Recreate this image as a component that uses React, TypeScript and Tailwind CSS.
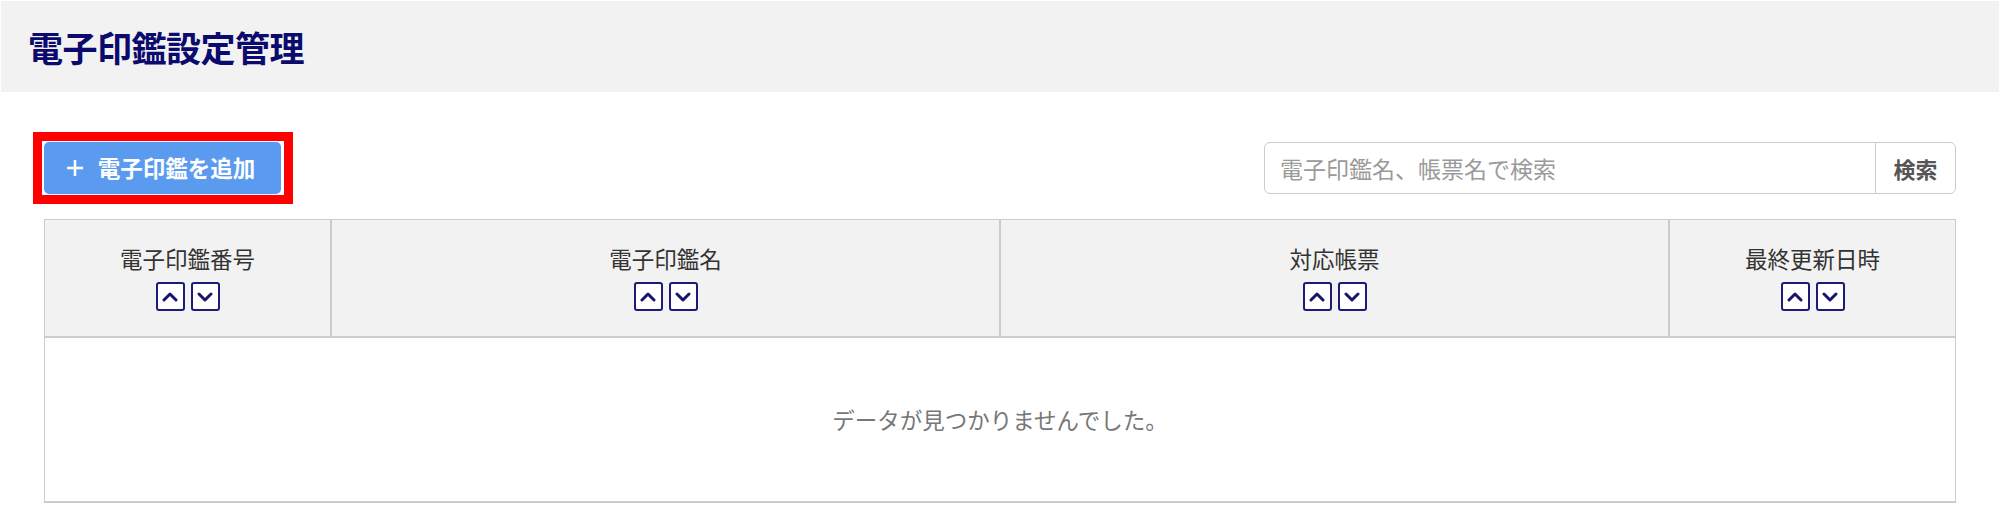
import { useState } from "react";

const columns = ["電子印鑑番号", "電子印鑑名", "対応帳票", "最終更新日時"];

const SortButton = ({ dir }: { dir: "up" | "down" }) => (
    <button className="w-[29px] h-[29px] border-2 border-[#1c1c78] rounded-[3px] bg-white flex items-center justify-center">
        <svg width="16" height="10" viewBox="0 0 16 10" fill="none" stroke="#15156e" strokeWidth="3" strokeLinecap="round" strokeLinejoin="round">
            {dir === "up" ? <polyline points="2,8 8,2 14,8" /> : <polyline points="2,2 8,8 14,2" />}
        </svg>
    </button>
);

const App = () => {
    const [keyword, setKeyword] = useState("");

    return (
        <div className="min-h-[528px] bg-white pt-[1px] font-['Noto_Sans_CJK_JP','Noto_Sans',sans-serif]">
            <div className="mx-[1px] h-[91px] bg-[#f2f2f2] flex items-center pl-[27px]">
                <h1 className="text-[35px] font-bold leading-none text-[#0b0b6e] tracking-[-0.5px]">電子印鑑設定管理</h1>
            </div>

            <div className="px-[44px]">
                <div className="mt-[40px] flex items-center justify-between">
                    {/* highlighted add button */}
                    <div className="ml-[-11px] border-[9px] border-[#ff0000] py-[1px] pl-[2px] pr-[3px]">
                        <button className="w-[237px] h-[52px] rounded-[5px] bg-[#5a9bef] text-white font-bold text-[22.5px] flex items-center justify-center gap-[14px] pr-[4px]">
                            <svg width="18" height="18" viewBox="0 0 18 18" stroke="white" strokeWidth="2.6">
                                <line x1="9" y1="1" x2="9" y2="17" />
                                <line x1="1" y1="9" x2="17" y2="9" />
                            </svg>
                            <span>電子印鑑を追加</span>
                        </button>
                    </div>

                    <div className="w-[692px] h-[52px] border border-[#cccccc] rounded-[6px] flex overflow-hidden">
                        <input
                            className="flex-1 px-[15px] text-[23px] text-[#333] placeholder:text-[#9a9a9a] outline-none"
                            placeholder="電子印鑑名、帳票名で検索"
                            value={keyword}
                            onChange={(e) => setKeyword(e.target.value)}
                        />
                        <button className="w-[80px] border-l border-[#cccccc] text-[22px] font-bold text-[#555]">検索</button>
                    </div>
                </div>

                <div className="mt-[15px] border border-b-2 border-[#cccccc]">
                    <div className="grid grid-cols-[287px_669px_669px_1fr] h-[118px] bg-[#f2f2f2] border-b-2 border-[#cccccc]">
                        {columns.map((c, i) => (
                            <div key={c} className={`flex flex-col items-center justify-center gap-[11px] ${i < 3 ? "border-r-2 border-[#cccccc]" : ""}`}>
                                <span className="text-[22.5px] leading-[26px] text-[#333]">{c}</span>
                                <div className="flex gap-[6px]">
                                    <SortButton dir="up" />
                                    <SortButton dir="down" />
                                </div>
                            </div>
                        ))}
                    </div>
                    <div className="h-[163px] flex items-center justify-center text-[22.5px] text-[#777]">
                        データが見つかりませんでした。
                    </div>
                </div>
            </div>
        </div>
    );
};

export default App;
